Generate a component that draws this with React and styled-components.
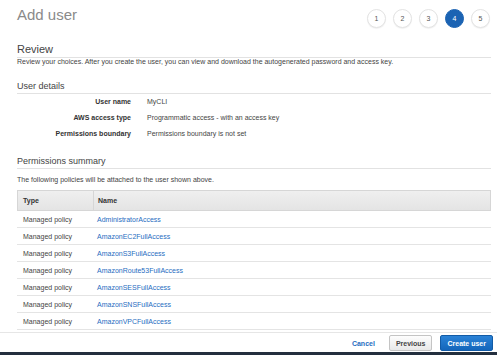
import React from "react";
import styled, { createGlobalStyle } from "styled-components";

const Global = createGlobalStyle`
  html, body { margin: 0; padding: 0; background: #fff; }
  body { font-family: "Liberation Sans", Arial, Helvetica, sans-serif; color: #444; }
  * { box-sizing: border-box; }
`;

const Shell = styled.div`
  width: 497px;
  height: 355px;
  display: flex;
  flex-direction: column;
  overflow: hidden;
  background: #fff;
`;

const Content = styled.div`
  flex: 1;
  padding: 0 6px 0 17px;
  display: flex;
  flex-direction: column;
`;

const Header = styled.div`
  height: 42px;
  display: flex;
  justify-content: space-between;
  align-items: flex-start;
`;

const Title = styled.h1`
  margin: 5px 0 0;
  font-size: 15px;
  line-height: 20px;
  font-weight: 400;
  color: #8a8a8a;
`;

const Steps = styled.div`
  display: flex;
  gap: 7px;
  margin-top: 9px;
  margin-right: 1px;
`;

const Step = styled.div`
  width: 19px;
  height: 19px;
  border-radius: 50%;
  display: flex;
  align-items: center;
  justify-content: center;
  font-size: 7px;
  font-weight: 400;
  color: ${(p) => (p.$active ? "#fff" : "#555")};
  background: ${(p) => (p.$active ? "#1b63b3" : "#fff")};
  border: 1px solid ${(p) => (p.$active ? "#1b63b3" : "#e3e3e3")};
  box-shadow: ${(p) => (p.$active ? "none" : "0 1px 1px rgba(0,0,0,0.06)")};
`;

const H2 = styled.h2`
  margin: 0;
  font-size: 11px;
  line-height: 14px;
  font-weight: 400;
  color: #444;
  padding-bottom: 1px;
  border-bottom: 1px solid #e2e2e2;
`;

const H3 = styled.h3`
  margin: ${(p) => p.$mt || 0}px 0 0;
  font-size: 9px;
  line-height: 11px;
  font-weight: 400;
  color: #444;
  padding-bottom: 1px;
  border-bottom: 1px solid #e2e2e2;
`;

const Desc = styled.p`
  margin: ${(p) => p.$mt || 0}px 0 0;
  font-size: 7px;
  line-height: ${(p) => p.$lh || 9}px;
  color: #444;
`;

const Details = styled.div`
  display: grid;
  grid-template-columns: 114px 1fr;
  column-gap: 16px;
`;

const Label = styled.div`
  font-size: 7px;
  line-height: 16px;
  font-weight: 700;
  color: #333;
  text-align: right;
`;

const Value = styled.div`
  font-size: 7px;
  line-height: 16px;
  color: #444;
`;

const Table = styled.div`
  margin-top: 6px;
  display: flex;
  flex-direction: column;
`;

const HeadRow = styled.div`
  display: grid;
  grid-template-columns: 75px 1fr;
  height: 21px;
  background: linear-gradient(#efefef, #e4e4e4);
  border: 1px solid #d6d6d6;
`;

const HeadCell = styled.div`
  display: flex;
  align-items: center;
  padding-left: ${(p) => (p.$first ? 5 : 4)}px;
  font-size: 7px;
  font-weight: 700;
  color: #333;
  border-left: ${(p) => (p.$first ? "none" : "1px solid #d6d6d6")};
`;

const Row = styled.div`
  display: grid;
  grid-template-columns: 75px 1fr;
  height: 17px;
  border-bottom: 1px solid #e4e4e4;
`;

const Cell = styled.div`
  display: flex;
  align-items: center;
  padding-left: ${(p) => (p.$first ? 6 : 5)}px;
  font-size: 7px;
  color: #444;
`;

const Link = styled.a`
  color: #1f6dbf;
  text-decoration: none;
  font-size: 7px;
`;

const Footer = styled.div`
  border-top: 1px solid #e6e6e6;
  padding: 2px 4px 1px 0;
  display: flex;
  justify-content: flex-end;
  align-items: center;
  background: #fff;
`;

const CancelBtn = styled.button`
  background: none;
  border: none;
  padding: 0;
  margin-right: 14px;
  font-family: inherit;
  font-size: 7px;
  font-weight: 700;
  color: #1f6dbf;
`;

const Btn = styled.button`
  height: 16px;
  padding: 0 6px;
  margin-left: ${(p) => p.$ml || 0}px;
  border-radius: 2px;
  font-family: inherit;
  font-size: 7px;
  font-weight: 700;
  color: ${(p) => (p.$primary ? "#fff" : "#444")};
  background: ${(p) =>
    p.$primary ? "linear-gradient(#2a82d6, #1466bb)" : "linear-gradient(#fdfdfd, #e8e8e8)"};
  border: 1px solid ${(p) => (p.$primary ? "#125ba6" : "#c4c4c4")};
`;

const Strip = styled.div`
  height: 3px;
  background: #232f3e;
`;

const policies = [
  "AdministratorAccess",
  "AmazonEC2FullAccess",
  "AmazonS3FullAccess",
  "AmazonRoute53FullAccess",
  "AmazonSESFullAccess",
  "AmazonSNSFullAccess",
  "AmazonVPCFullAccess",
];

const details = [
  ["User name", "MyCLI"],
  ["AWS access type", "Programmatic access - with an access key"],
  ["Permissions boundary", "Permissions boundary is not set"],
];

export default function App() {
  return (
    <>
      <Global />
      <Shell>
        <Content>
          <Header>
            <Title>Add user</Title>
            <Steps>
              {[1, 2, 3, 4, 5].map((n) => (
                <Step key={n} $active={n === 4}>
                  {n}
                </Step>
              ))}
            </Steps>
          </Header>
          <H2>Review</H2>
          <Desc $lh={8}>
            Review your choices. After you create the user, you can view and download the
            autogenerated password and access key.
          </Desc>
          <H3 $mt={15}>User details</H3>
          <Details>
            {details.map(([l, v]) => (
              <React.Fragment key={l}>
                <Label>{l}</Label>
                <Value>{v}</Value>
              </React.Fragment>
            ))}
          </Details>
          <H3 $mt={14}>Permissions summary</H3>
          <Desc $mt={6}>The following policies will be attached to the user shown above.</Desc>
          <Table>
            <HeadRow>
              <HeadCell $first>Type</HeadCell>
              <HeadCell>Name</HeadCell>
            </HeadRow>
            {policies.map((p) => (
              <Row key={p}>
                <Cell $first>Managed policy</Cell>
                <Cell>
                  <Link href="#">{p}</Link>
                </Cell>
              </Row>
            ))}
          </Table>
        </Content>
        <Footer>
          <CancelBtn>Cancel</CancelBtn>
          <Btn>Previous</Btn>
          <Btn $primary $ml={8}>
            Create user
          </Btn>
        </Footer>
        <Strip />
      </Shell>
    </>
  );
}
